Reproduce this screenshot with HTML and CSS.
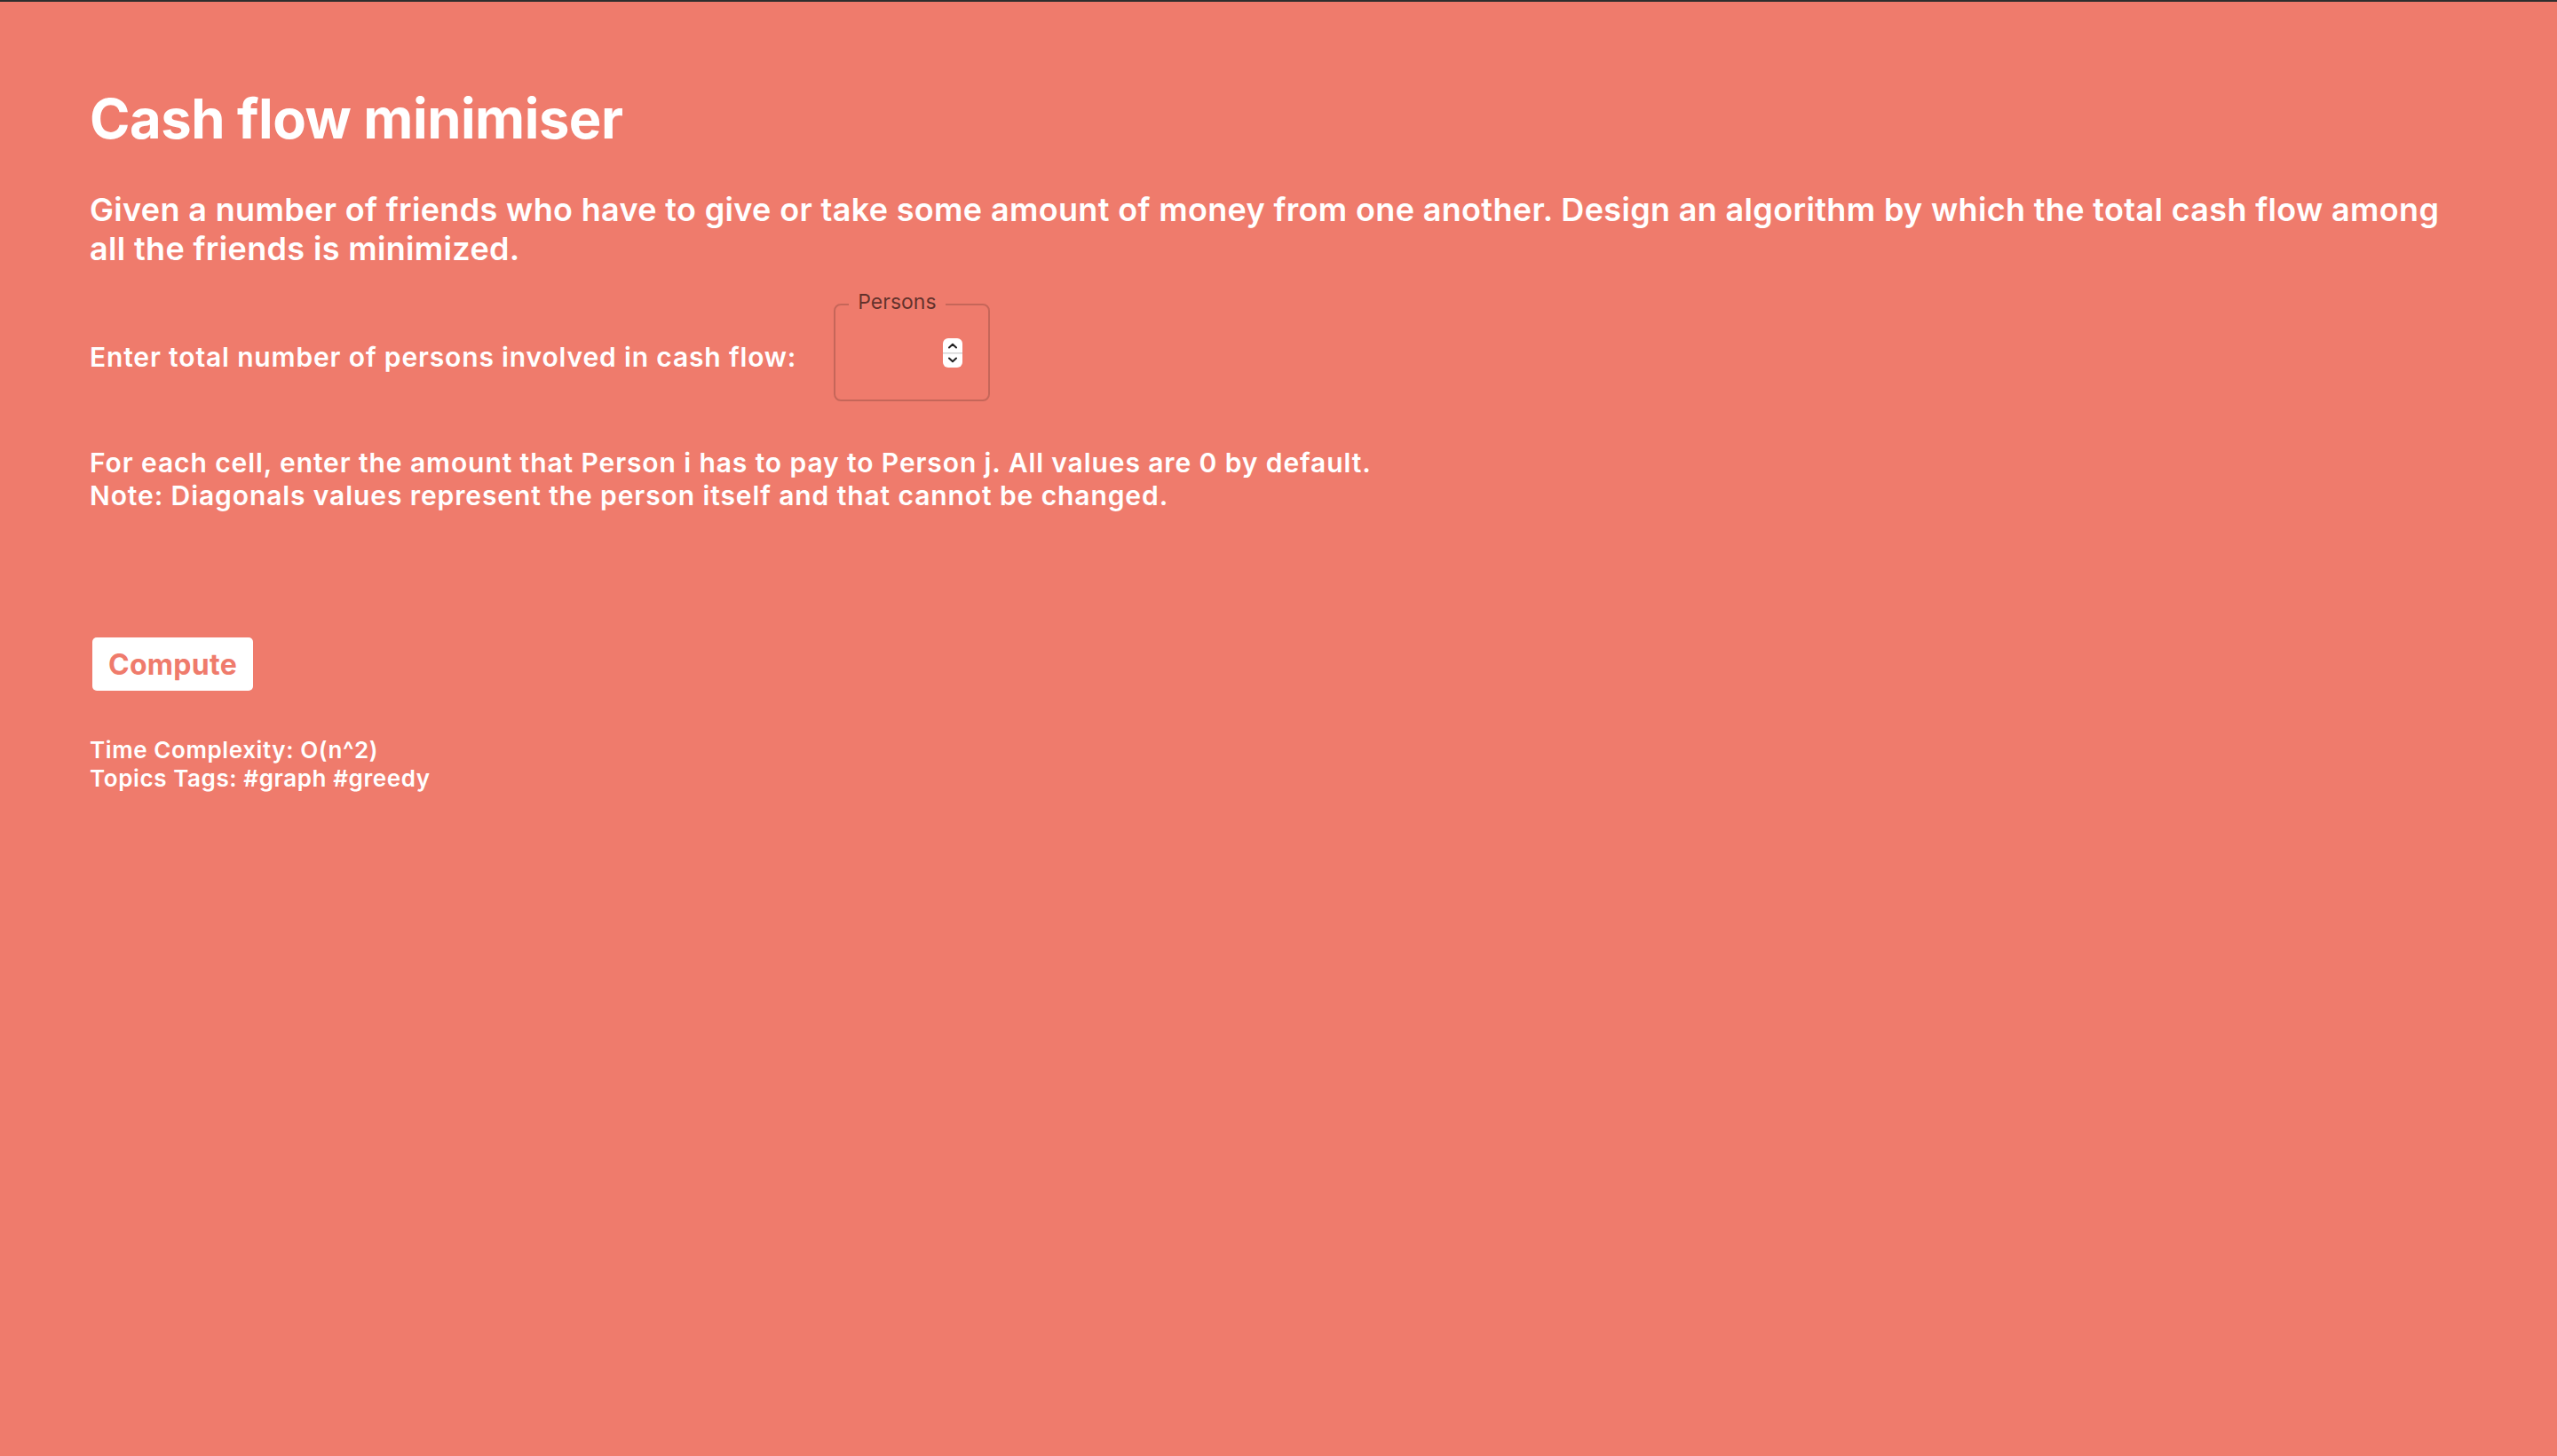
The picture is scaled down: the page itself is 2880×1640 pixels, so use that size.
FILE: index.html
```html
<!DOCTYPE html>
<html lang="en">
<head>
<meta charset="utf-8">
<title>Cash flow minimiser</title>
<link rel="stylesheet" href="styles.css">
</head>
<body>
<main class="page">
  <h1 class="title">Cash flow minimiser</h1>
  <p class="lead">Given a number of friends who have to give or take some amount of money from one another. Design an algorithm by which the total cash flow among all the friends is minimized.</p>
  <div class="persons-row">
    <label class="persons-label" for="persons">Enter total number of persons involved in cash flow:</label>
    <div class="field">
      <span class="field-legend">Persons</span>
      <input class="field-input" id="persons" type="number">
      <span class="spinner" aria-hidden="true">
        <svg width="22" height="33" viewBox="0 0 22 33">
          <rect x="0" y="0" width="22" height="33" rx="6" ry="6" fill="#ffffff"/>
          <rect x="0" y="16" width="22" height="1.5" fill="#d4d4d4"/>
          <path d="M7 10.5 L11 6.8 L15 10.5" fill="none" stroke="#222" stroke-width="2" stroke-linecap="round" stroke-linejoin="round"/>
          <path d="M7 22.5 L11 26.2 L15 22.5" fill="none" stroke="#222" stroke-width="2" stroke-linecap="round" stroke-linejoin="round"/>
        </svg>
      </span>
    </div>
  </div>
  <p class="notes">For each cell, enter the amount that Person i has to pay to Person j. All values are 0 by default.<br>Note: Diagonals values represent the person itself and that cannot be changed.</p>
  <button class="compute" type="button">Compute</button>
  <p class="meta">Time Complexity: O(n^2)<br>Topics Tags: #graph #greedy</p>
</main>
</body>
</html>
```

FILE: styles.css
```css
html, body {
  margin: 0;
  padding: 0;
}
body {
  background: #ef7b6c;
  border-top: 2px solid #2e2e2e;
  min-height: 1638px;
  font-family: Inter, "Noto Sans", "Liberation Sans", sans-serif;
  color: #ffffff;
}
.page {
  padding: 95px 90px 0 101px;
  display: flex;
  flex-direction: column;
  align-items: flex-start;
}
.title {
  margin: 0;
  font-size: 61.5px;
  line-height: 74px;
  font-weight: 700;
  letter-spacing: -0.5px;
}
.lead {
  margin: 43px 0 0 0;
  font-size: 36px;
  line-height: 44px;
  font-weight: 600;
  letter-spacing: 0.34px;
}
.persons-row {
  margin-top: 40px;
  display: flex;
  align-items: flex-start;
  gap: 42px;
}
.persons-label {
  margin-top: 42px;
  font-size: 30px;
  line-height: 36px;
  font-weight: 600;
  letter-spacing: 0.85px;
}
.field {
  position: relative;
  box-sizing: border-box;
  width: 176px;
  height: 110px;
  border: 2px solid rgba(0, 0, 0, 0.17);
  border-radius: 8px;
}
.field-legend {
  position: absolute;
  left: 15px;
  top: -17px;
  padding: 0 10px;
  background: #ef7b6c;
  font-size: 23px;
  line-height: 26px;
  font-weight: 400;
  color: rgba(0, 0, 0, 0.6);
}
.field-input {
  box-sizing: border-box;
  width: 100%;
  height: 100%;
  border: 0;
  background: transparent;
  outline: none;
  padding: 0 20px;
  font: inherit;
  font-size: 28px;
  color: #ffffff;
  -moz-appearance: textfield;
}
.field-input::-webkit-outer-spin-button,
.field-input::-webkit-inner-spin-button {
  -webkit-appearance: none;
  margin: 0;
}
.spinner {
  position: absolute;
  left: 121px;
  top: 37px;
  width: 22px;
  height: 33px;
  display: block;
}
.spinner svg {
  display: block;
}
.notes {
  margin: 51px 0 0 0;
  font-size: 30px;
  line-height: 37px;
  font-weight: 600;
  letter-spacing: 0.9px;
}
.compute {
  margin: 141px 0 0 3px;
  width: 181px;
  height: 60px;
  border: 0;
  border-radius: 5px;
  background: #ffffff;
  color: #ef7b6c;
  font-family: Inter, "Noto Sans", "Liberation Sans", sans-serif;
  font-size: 32px;
  font-weight: 700;
  letter-spacing: 0.3px;
  padding: 0;
  cursor: pointer;
}
.meta {
  margin: 51px 0 0 0;
  font-size: 26px;
  line-height: 32px;
  font-weight: 600;
  letter-spacing: 0.6px;
}
```
